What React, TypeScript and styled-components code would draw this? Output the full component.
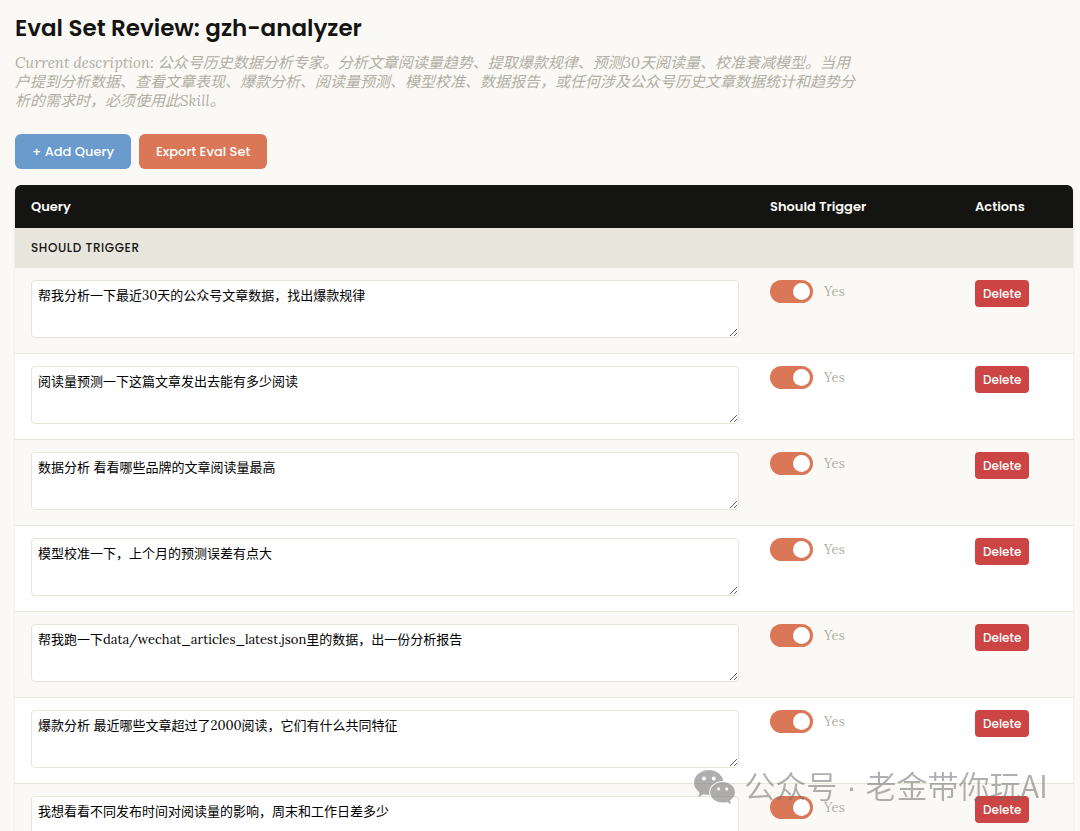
import React, { useState } from "react";
import styled, { createGlobalStyle } from "styled-components";

const sans = `Poppins, Inter, "Noto Sans CJK SC", sans-serif`;
const serif = `Lora, "Liberation Serif", "Noto Sans CJK SC", serif`;

const GlobalStyle = createGlobalStyle`
  *, *::before, *::after { box-sizing: border-box; }
  html { scrollbar-width: none; }
  body {
    margin: 0;
    background: #faf9f5;
    color: #141413;
    font-family: ${serif};
  }
`;

const Page = styled.main`
  padding: 12px 7px 24px 15px;
`;

const Title = styled.h1`
  margin: 0 0 9px;
  font: 600 23px/32px ${sans};
`;

const Description = styled.p`
  margin: 0 0 24px;
  max-width: 846px;
  color: #b0aea5;
  font-size: 15px;
  font-style: italic;
  line-height: 19px;
`;

const Controls = styled.div`
  display: flex;
  gap: 8px;
  margin-bottom: 16px;
`;

const Button = styled.button<{ $color: string }>`
  height: 35px;
  padding: 0 17px;
  border: 0;
  border-radius: 6px;
  background: ${(p) => p.$color};
  color: #fff;
  font: 500 13px/20px ${sans};
  cursor: pointer;
`;

const DeleteButton = styled(Button)`
  display: block;
  height: 27px;
  padding: 0 8px;
  border-radius: 4px;
  font-size: 12px;
`;

const Table = styled.table`
  width: 100%;
  table-layout: fixed;
  border-spacing: 0;
  overflow: hidden;
  border-radius: 6px;
  background: #fff;
  box-shadow: 0 1px 3px rgba(0, 0, 0, 0.08);
`;

const TriggerCol = styled.col`
  width: 205px;
`;

const ActionsCol = styled.col`
  width: 114px;
`;

const HeadCell = styled.th`
  height: 43px;
  padding: 0 16px;
  background: #141413;
  color: #faf9f5;
  font: 600 13px/20px ${sans};
  text-align: left;
`;

const SectionCell = styled.th`
  height: 40px;
  padding: 0 16px;
  background: #e8e6dc;
  font: 500 12px/20px ${sans};
  letter-spacing: 0.05em;
  text-align: left;
  text-transform: uppercase;
`;

const Row = styled.tr`
  &:nth-child(even) {
    background: #faf9f5;
  }
`;

const Cell = styled.td`
  padding: 12px 15px 15px 16px;
  border-bottom: 1px solid #e8e6dc;
  vertical-align: top;
`;

const QueryInput = styled.textarea`
  display: block;
  width: 100%;
  height: 58px;
  padding: 6px;
  border: 1px solid #e8e6dc;
  border-radius: 4px;
  background: #fff;
  color: #000;
  font: 400 13px/18px ${serif};
  resize: vertical;
`;

const Toggle = styled.label`
  display: flex;
  align-items: center;
  gap: 11px;
  color: #b0aea5;
  font-size: 13px;
  line-height: 23px;
`;

const Switch = styled.input`
  appearance: none;
  display: flex;
  align-items: center;
  width: 43px;
  height: 23px;
  margin: 0;
  padding: 3px;
  border-radius: 12px;
  background: #b0aea5;
  cursor: pointer;

  &::before {
    content: "";
    width: 17px;
    height: 17px;
    border-radius: 50%;
    background: #fff;
  }

  &:checked {
    justify-content: flex-end;
    background: #d97757;
  }
`;

const Watermark = styled.div`
  position: fixed;
  right: 32px;
  bottom: 21px;
  display: flex;
  align-items: center;
  gap: 8px;
  color: rgba(110, 110, 110, 0.55);
  font: 350 31px/44px "Noto Sans CJK SC", sans-serif;
  white-space: nowrap;
  pointer-events: none;
`;

const Dot = styled.span`
  margin: 0 2px;
  font-family: "Liberation Sans", sans-serif;
`;

const queries = [
  "帮我分析一下最近30天的公众号文章数据，找出爆款规律",
  "阅读量预测一下这篇文章发出去能有多少阅读",
  "数据分析 看看哪些品牌的文章阅读量最高",
  "模型校准一下，上个月的预测误差有点大",
  "帮我跑一下data/wechat_articles_latest.json里的数据，出一份分析报告",
  "爆款分析 最近哪些文章超过了2000阅读，它们有什么共同特征",
  "我想看看不同发布时间对阅读量的影响，周末和工作日差多少",
];

function WeChatIcon() {
  return (
    <svg width="42" height="34" viewBox="0 0 42 34" fill="currentColor" aria-hidden="true">
      <path
        fillRule="evenodd"
        d="M15 0C6.700 0 0 5.600 0 12.600c0 4 2.100 7.400 5.500 9.800L4.500 27l5-2.700c1.800.5 3.600.8 5.500.8h.6a10.500 10.500 0 0 1-.4-2.900c0-6.400 6.200-11.300 13.800-11.300h.4C28 4.600 22 0 15 0Zm-5 6.600a2 2 0 1 1 0 4 2 2 0 0 1 0-4Zm9.800 0a2 2 0 1 1 0 4 2 2 0 0 1 0-4Z"
      />
      <path
        fillRule="evenodd"
        d="M28.600 11.900c-6.900 0-12.400 4.600-12.400 10.300s5.500 10.300 12.400 10.300c1.500 0 2.900-.2 4.200-.6l4.200 2.100-.9-3.700c3-1.900 4.900-4.800 4.900-8.100 0-5.700-5.500-10.300-12.400-10.300Zm-4 5.400a1.600 1.600 0 1 1 0 3.200 1.600 1.600 0 0 1 0-3.200Zm8.200 0a1.600 1.600 0 1 1 0 3.200 1.600 1.600 0 0 1 0-3.200Z"
      />
    </svg>
  );
}

function QueryRow({ text }: { text: string }) {
  const [on, setOn] = useState(true);
  return (
    <Row>
      <Cell>
        <QueryInput aria-label="Query" defaultValue={text} spellCheck={false} />
      </Cell>
      <Cell>
        <Toggle>
          <Switch type="checkbox" checked={on} onChange={(e) => setOn(e.target.checked)} />
          {on ? "Yes" : "No"}
        </Toggle>
      </Cell>
      <Cell>
        <DeleteButton type="button" $color="#cc4444">Delete</DeleteButton>
      </Cell>
    </Row>
  );
}

export default function App() {
  return (
    <>
      <GlobalStyle />
      <Page>
        <Title>Eval Set Review: gzh-analyzer</Title>
        <Description lang="zh-CN">
          Current description: 公众号历史数据分析专家。分析文章阅读量趋势、提取爆款规律、预测30天阅读量、校准衰减模型。当用户提到分析数据、查看文章表现、爆款分析、阅读量预测、模型校准、数据报告，或任何涉及公众号历史文章数据统计和趋势分析的需求时，必须使用此Skill。
        </Description>
        <Controls>
          <Button type="button" $color="#6a9bcc">+ Add Query</Button>
          <Button type="button" $color="#d97757">Export Eval Set</Button>
        </Controls>
        <Table>
          <colgroup>
            <col />
            <TriggerCol />
            <ActionsCol />
          </colgroup>
          <thead>
            <tr>
              <HeadCell scope="col">Query</HeadCell>
              <HeadCell scope="col">Should Trigger</HeadCell>
              <HeadCell scope="col">Actions</HeadCell>
            </tr>
          </thead>
          <tbody>
            <tr>
              <SectionCell colSpan={3} scope="colgroup">Should Trigger</SectionCell>
            </tr>
            {queries.map((q) => (
              <QueryRow key={q} text={q} />
            ))}
          </tbody>
        </Table>
      </Page>
      <Watermark>
        <WeChatIcon />
        <span>公众号 <Dot>·</Dot> 老金带你玩AI</span>
      </Watermark>
    </>
  );
}
